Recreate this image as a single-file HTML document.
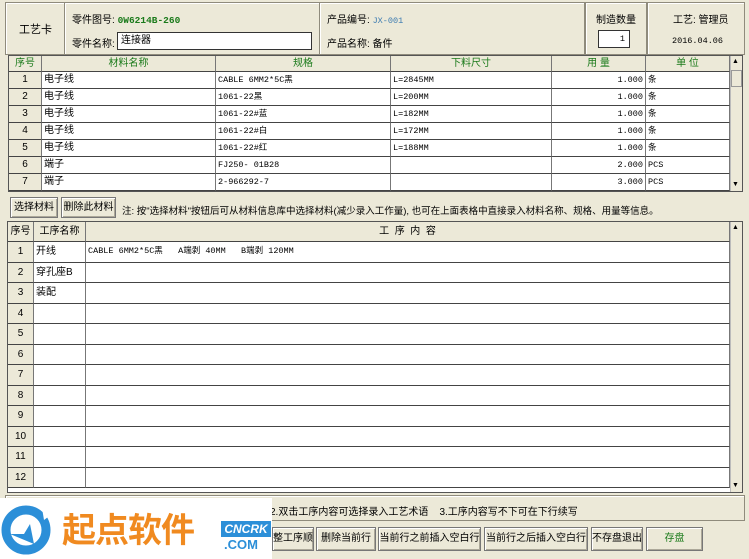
<!DOCTYPE html><html><head><meta charset="utf-8"><style>
*{margin:0;padding:0;box-sizing:border-box}
body{width:749px;height:559px;background:#ece9d8;position:relative;overflow:hidden;font-family:"Liberation Sans","Noto Sans CJK SC",sans-serif;font-size:10px;color:#000}
.a{position:absolute;white-space:nowrap}
.box{position:absolute;border:1px solid #8f8b7c;box-shadow:inset 1px 1px 0 #fff}
.g{position:absolute;background:#fff;border:1px solid #555}
.c{position:absolute;border-right:1px solid #777;border-bottom:1px solid #444;height:100%;white-space:nowrap;overflow:hidden;line-height:16px}
.btn{position:absolute;border:1px solid #777;background:#ece9d8;box-shadow:inset 1px 1px 0 #fff,inset -1px -1px 0 #aca899;text-align:center;font-size:10px;line-height:20px;white-space:nowrap;overflow:hidden}
.mono{font-family:"Liberation Mono",monospace;font-size:8.5px}
.sb{position:absolute;background:#ece9d8;border-left:1px solid #bbb}
</style></head><body>
<div class="box" style="left:5px;top:2px;width:60px;height:53px"></div>
<div class="a" style="left:19px;top:21px;font-size:11px">工艺卡</div>
<div class="box" style="left:64px;top:2px;width:256px;height:53px"></div>
<div class="a" style="left:72px;top:11px">零件图号: <b class="mono" style="color:#1a7a1a;font-size:9.5px">0W6214B-260</b></div>
<div class="a" style="left:72px;top:35px">零件名称:</div>
<div class="a" style="left:117px;top:32px;width:195px;height:18px;background:#fff;border:1px solid #333;padding-left:3px;line-height:16px">连接器</div>
<div class="box" style="left:319px;top:2px;width:266px;height:53px"></div>
<div class="a" style="left:327px;top:11px">产品编号: <span class="mono" style="color:#3a7ab0">JX-001</span></div>
<div class="a" style="left:327px;top:35px">产品名称: 备件</div>
<div class="box" style="left:585px;top:2px;width:62px;height:53px"></div>
<div class="a" style="left:596px;top:11px">制造数量</div>
<div class="a mono" style="left:598px;top:30px;width:32px;height:18px;background:#fff;border:1px solid #333;text-align:right;padding-right:4px;line-height:16px">1</div>
<div class="box" style="left:647px;top:2px;width:98px;height:53px"></div>
<div class="a" style="left:673px;top:11px">工艺: 管理员</div>
<div class="a mono" style="left:672px;top:36px">2016.04.06</div>

<div class="g" style="left:8px;top:55px;width:735px;height:137px"></div>
<div id="t1"></div>
<div class="sb" style="left:730px;top:56px;width:12px;height:135px"></div>
<div class="a" style="left:732px;top:58px;font-size:7px">▲</div>
<div class="a" style="left:731px;top:70px;width:11px;height:17px;border:1px solid #999;background:#ece9d8"></div>
<div class="a" style="left:732px;top:181px;font-size:7px">▼</div>

<div class="btn" style="left:10px;top:197px;width:48px;height:21px">选择材料</div>
<div class="btn" style="left:61px;top:197px;width:55px;height:21px">删除此材料</div>
<div class="a" style="left:122px;top:203px;font-size:9.5px">注: 按"选择材料"按钮后可从材料信息库中选择材料(减少录入工作量), 也可在上面表格中直接录入材料名称、规格、用量等信息。</div>

<div class="g" style="left:7px;top:221px;width:736px;height:272px"></div>
<div id="t2"></div>
<div class="sb" style="left:730px;top:222px;width:12px;height:270px"></div>
<div class="a" style="left:732px;top:224px;font-size:7px">▲</div>
<div class="a" style="left:732px;top:482px;font-size:7px">▼</div>

<div class="box" style="left:5px;top:495px;width:740px;height:26px"></div>
<div class="a" style="left:270px;top:503px;font-size:10px">2.双击工序内容可选择录入工艺术语 &nbsp;&nbsp;&nbsp;3.工序内容写不下可在下行续写</div>
<div class="btn" style="left:272px;top:527px;width:42px;height:24px;line-height:22px;text-align:right;padding-right:2px">整工序顺序</div>
<div class="btn" style="left:316px;top:527px;width:60px;height:24px;line-height:22px">删除当前行</div>
<div class="btn" style="left:378px;top:527px;width:103px;height:24px;line-height:22px">当前行之前插入空白行</div>
<div class="btn" style="left:484px;top:527px;width:104px;height:24px;line-height:22px">当前行之后插入空白行</div>
<div class="btn" style="left:591px;top:527px;width:52px;height:24px;line-height:22px">不存盘退出</div>
<div class="btn" style="left:646px;top:527px;width:57px;height:24px;line-height:22px;color:#1a7a1a">存盘</div>

<div class="a" style="left:0;top:498px;width:272px;height:61px;background:#fff"></div>
<svg class="a" style="left:0;top:500px" width="60" height="59" viewBox="0 0 60 59"><circle cx="26" cy="30" r="20" fill="none" stroke="#2c8fd8" stroke-width="9"/><path d="M10 34 L24 34 L30 24 L34 44 Z" fill="#2c8fd8"/><path d="M42 8 L52 14 L44 20" fill="#fff"/></svg>
<div class="a" style="left:62px;top:512px;font-size:34px;font-weight:bold;color:#f08a20;line-height:38px;letter-spacing:-1px">起点软件</div>
<div class="a" style="left:221px;top:521px;width:50px;height:16px;background:#2c8fd8;color:#fff;font-weight:bold;font-size:12px;text-align:center;line-height:16px;font-style:italic">CNCRK</div>
<div class="a" style="left:224px;top:537px;color:#2c8fd8;font-weight:bold;font-size:13px">.COM</div>

<script>
function grid(id,top,cols,hdr,rows,rh,hh){var h='';var y=top;
for(var r=-1;r<rows.length;r++){var H=r<0?hh:rh;var d=r<0?hdr:rows[r];
for(var i=0;i<cols.length-1;i++){var w=cols[i+1]-cols[i];var t=d[i]||'';var al=(r<0||i==0)?'center':(d.al&&d.al[i])||'left';
var st='left:'+cols[i]+'px;top:'+y+'px;width:'+w+'px;height:'+H+'px;line-height:'+(H-1)+'px;text-align:'+al+';padding:0 2px;';
if(r<0)st+='color:'+(id=='t1'?'#1a7a1a':'#000')+';background:#ece9d8;';
if(i==0&&r>=0)st+='background:#ece9d8;';
h+='<div class="c'+(d.m&&d.m[i]?' mono':'')+'" style="'+st+'">'+t+'</div>';}
y+=H;}
document.getElementById(id).innerHTML=h;}
var c1=[9,42,216,391,552,646,730];
var R=[['1','电子线','CABLE 6MM2*5C黑','L=2845MM','1.000','条'],['2','电子线','1061-22黑','L=200MM','1.000','条'],['3','电子线','1061-22#蓝','L=182MM','1.000','条'],['4','电子线','1061-22#白','L=172MM','1.000','条'],['5','电子线','1061-22#红','L=188MM','1.000','条'],['6','端子','FJ250- 01B28','','2.000','PCS'],['7','端子','2-966292-7','','3.000','PCS']];
R.forEach(function(r){r.al=[0,0,0,0,'right',0];r.m=[0,0,1,1,1,1]});
grid('t1',56,c1,['序号','材料名称','规格','下料尺寸','用 量','单 位'],R,17,16);
var c2=[8,34,86,730];var R2=[];var nm=['开线','穿孔座B','装配'];
for(var i=1;i<=12;i++){var r=[String(i),nm[i-1]||'',i==1?'CABLE 6MM2*5C黑 &nbsp; A端剥 40MM &nbsp; B端剥 120MM':''];r.m=[0,0,1];R2.push(r)}
grid('t2',222,c2,['序号','工序名称','工 &nbsp;序 &nbsp;内 &nbsp;容'],R2,20.5,20);
</script>
</body></html>
